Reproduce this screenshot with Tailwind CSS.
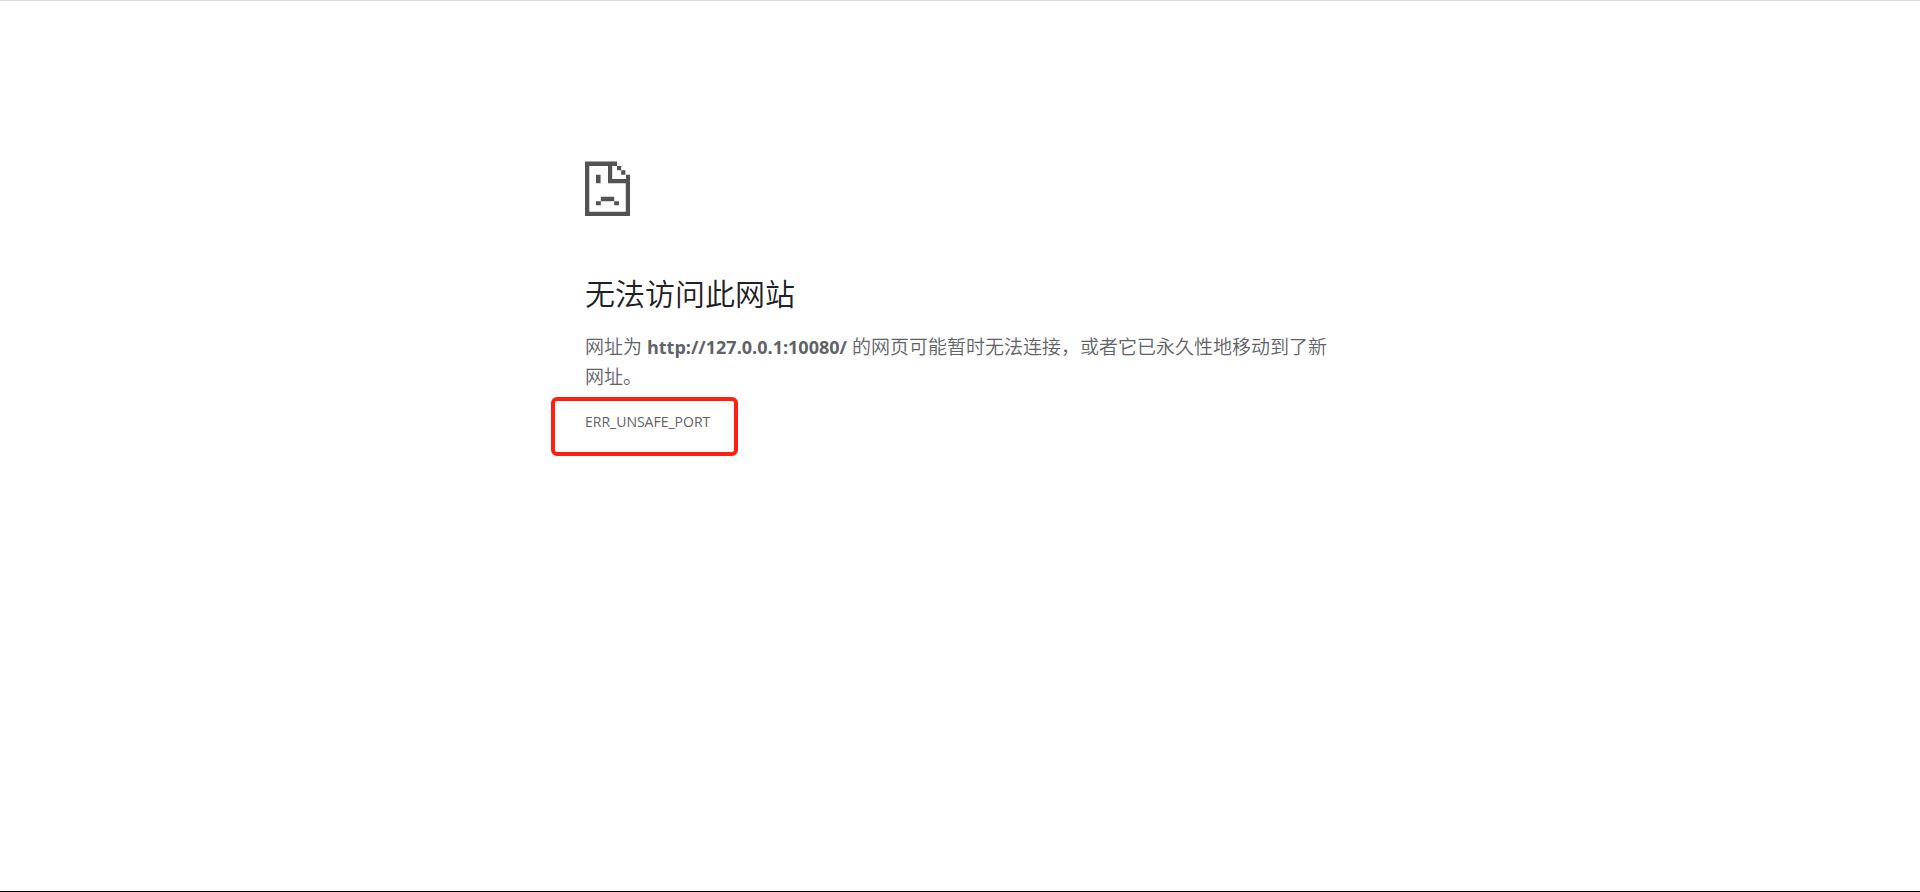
<!DOCTYPE html>
<html lang="zh-CN">
<head>
  <meta charset="UTF-8" />
  <meta name="viewport" content="width=device-width, initial-scale=1.0"/>
  <title>127.0.0.1</title>
  <script src="https://cdn.jsdelivr.net/npm/@tailwindcss/browser@4"></script>
</head>
<body class="min-h-screen bg-white border-t border-t-[#d9d9d9] border-b border-b-black text-[#5f6368] font-['Open_Sans','Noto_Sans_CJK_SC',sans-serif]">
  <main class="w-full max-w-[750px] mx-auto pt-40">
    <!-- sad page icon -->
    <svg class="block w-[45px] h-[55px] fill-[#535353]" viewBox="0 0 45 55" aria-hidden="true">
      <path fill-rule="evenodd" d="M0 .6H32V5H27.2V18H41V13.8H45V55H0ZM4.3 5V50.8H40.8V22.2H23V5Z"/>
      <path d="M32 5h4.2v4.2h-4.2zM36.2 9.2h4.2v4.6h-4.2zM11 13.8h4.6v8.4h-4.6zM15.8 35.8h13.4v4.4H15.8zM11 40.2h4.8v4H11zM29.2 40.2h4.8v4h-4.8z"/>
    </svg>

    <h1 class="mt-14 text-[30px] leading-11 font-[350] text-[#202124]">无法访问此网站</h1>

    <p class="mt-4 text-[19px] leading-[30px] font-[350]">网址为 <strong class="text-[18px] font-bold">http://127.0.0.1:10080/</strong> 的网页可能暂时无法连接，或者它已永久性地移动到了新网址。</p>

    <!-- error code, highlighted -->
    <div class="relative mt-5 w-fit text-sm">
      ERR_UNSAFE_PORT
      <span class="absolute -left-[34px] -right-7 -top-[15px] h-[59px] border-4 border-[#ff1e10] rounded-md"></span>
    </div>
  </main>
</body>
</html>
